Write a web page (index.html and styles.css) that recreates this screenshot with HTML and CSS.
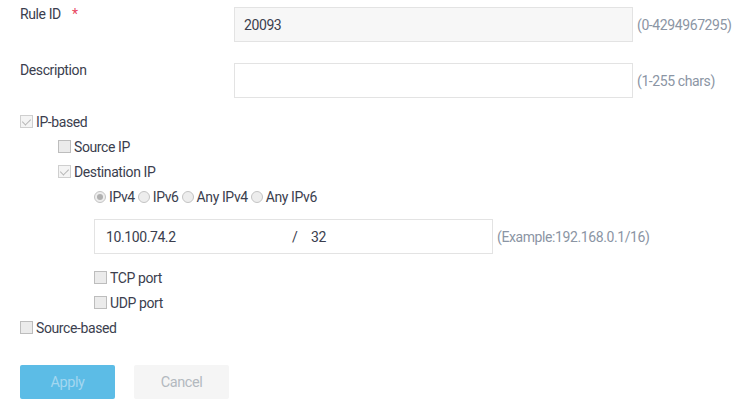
FILE: index.html
```html
<!DOCTYPE html>
<html>
<head>
<meta charset="utf-8">
<link rel="stylesheet" href="styles.css">
</head>
<body>
<div class="form">
  <div class="field">
    <div class="label">Rule ID <span class="req">*</span></div>
    <div class="input readonly">20093</div>
    <div class="hint">(0-4294967295)</div>
  </div>
  <div class="field second">
    <div class="label">Description</div>
    <div class="input"></div>
    <div class="hint">(1-255 chars)</div>
  </div>

  <div class="checks">
    <div class="row"><span class="cb checked"></span><span>IP-based</span></div>
    <div class="row lvl1"><span class="cb"></span><span>Source IP</span></div>
    <div class="row lvl1"><span class="cb checked"></span><span>Destination IP</span></div>
    <div class="row lvl2 radios">
      <span class="rd on"></span><span class="rl">IPv4</span>
      <span class="rd"></span><span class="rl">IPv6</span>
      <span class="rd"></span><span class="rl">Any IPv4</span>
      <span class="rd"></span><span class="rl">Any IPv6</span>
    </div>
    <div class="iprow lvl2">
      <div class="input ip"><span class="addr">10.100.74.2</span><span class="slash">/</span><span>32</span></div>
      <div class="hint">(Example:192.168.0.1/16)</div>
    </div>
    <div class="row lvl2 tcp"><span class="cb"></span><span>TCP port</span></div>
    <div class="row lvl2"><span class="cb"></span><span>UDP port</span></div>
    <div class="row"><span class="cb"></span><span>Source-based</span></div>
  </div>

  <div class="buttons">
    <div class="btn apply">Apply</div>
    <div class="btn cancel">Cancel</div>
  </div>
</div>
</body>
</html>
```

FILE: styles.css
```css
html, body {
  margin: 0;
  padding: 0;
  background: #fff;
}
body {
  font-family: "Roboto", "Liberation Sans", sans-serif;
  font-size: 14px;
  letter-spacing: -0.4px;
  color: #3b3e4e;
}
.form {
  padding: 7px 0 0 20px;
}
.field {
  display: flex;
  align-items: flex-start;
}
.field.second {
  margin-top: 21px;
}
.label {
  width: 214px;
  line-height: 15px;
}
.req {
  color: #e8475f;
  margin-left: 8px;
}
.input {
  box-sizing: border-box;
  width: 399px;
  height: 35px;
  border: 1px solid #e3e3e3;
  background: #fff;
  display: flex;
  align-items: center;
  padding-left: 9px;
}
.input.readonly {
  background: #f7f7f7;
}
.hint {
  color: #8b95a4;
  margin-left: 4px;
  align-self: center;
}
.checks {
  margin-top: 11px;
}
.row {
  height: 25px;
  display: flex;
  align-items: center;
}
.lvl1 { padding-left: 38px; }
.lvl2 { padding-left: 74px; }
.cb {
  box-sizing: border-box;
  width: 13px;
  height: 13px;
  border: 1px solid #bdbdbd;
  background: #ebebeb;
  margin-right: 3px;
  position: relative;
}
.cb.checked {
  background: #f4f4f4;
  border-color: #cfcfcf;
}
.cb.checked::after {
  content: "";
  position: absolute;
  left: 3px;
  top: 1px;
  width: 4px;
  height: 7px;
  border-right: 1px solid #b5b5b5;
  border-bottom: 1px solid #b5b5b5;
  transform: rotate(45deg);
}
.rd {
  box-sizing: border-box;
  width: 12px;
  height: 12px;
  border-radius: 50%;
  border: 1px solid #c4c4c4;
  background: #ededed;
  margin-right: 3px;
  position: relative;
}
.rl { margin-right: 3px; }
.rd.on::after {
  content: "";
  position: absolute;
  left: 2px;
  top: 2px;
  width: 6px;
  height: 6px;
  border-radius: 50%;
  background: #b0b0b0;
}
.iprow {
  display: flex;
  margin-top: 10px;
}
.input.ip {
  padding-left: 11px;
}
.addr { width: 186px; }
.slash { width: 19px; }
.tcp { margin-top: 11px; }
.buttons {
  display: flex;
  gap: 19px;
  margin-top: 25px;
}
.btn {
  width: 95px;
  height: 34px;
  border-radius: 2px;
  display: flex;
  align-items: center;
  justify-content: center;
  font-size: 14.5px;
}
.apply {
  background: #5cbce6;
  color: #a3d7f0;
}
.cancel {
  background: #f5f5f5;
  color: #b3b9bf;
}
```
